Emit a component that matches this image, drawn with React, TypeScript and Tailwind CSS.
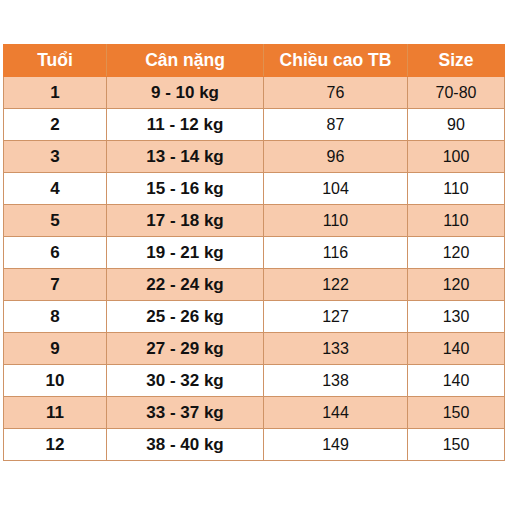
const rows = [
  ["1", "9 - 10 kg", "76", "70-80"],
  ["2", "11 - 12 kg", "87", "90"],
  ["3", "13 - 14 kg", "96", "100"],
  ["4", "15 - 16 kg", "104", "110"],
  ["5", "17 - 18 kg", "110", "110"],
  ["6", "19 - 21 kg", "116", "120"],
  ["7", "22 - 24 kg", "122", "120"],
  ["8", "25 - 26 kg", "127", "130"],
  ["9", "27 - 29 kg", "133", "140"],
  ["10", "30 - 32 kg", "138", "140"],
  ["11", "33 - 37 kg", "144", "150"],
  ["12", "38 - 40 kg", "149", "150"],
];

export default function App() {
  return (
    <div className="w-[505px] h-[505px] bg-white pt-[44px] pl-[3px] font-['Liberation_Sans',Arial,sans-serif]">
      <table className="border-collapse table-fixed w-[501px]">
        <colgroup>
          <col className="w-[103px]" />
          <col className="w-[157px]" />
          <col className="w-[144px]" />
          <col className="w-[97px]" />
        </colgroup>
        <thead>
          <tr className="h-[32px] bg-[#ed7d31] text-white text-[17.5px] font-bold">
            <th className="border border-[#ed7d31] border-r-[#e0914f] text-center">Tuổi</th>
            <th className="border border-[#ed7d31] border-r-[#e0914f] text-center">Cân nặng</th>
            <th className="border border-[#ed7d31] border-r-[#e0914f] text-center">Chiều cao TB</th>
            <th className="border border-[#ed7d31] text-center">Size</th>
          </tr>
        </thead>
        <tbody>
          {rows.map((r, i) => (
            <tr
              key={r[0]}
              className={`h-[32px] text-[#111] ${i % 2 === 0 ? "bg-[#f8cbad]" : "bg-white"}`}
            >
              <td className="border border-[#cf9366] text-center font-bold text-[17px]">{r[0]}</td>
              <td className="border border-[#cf9366] text-center font-bold text-[17px]">{r[1]}</td>
              <td className="border border-[#cf9366] text-center text-[16px]">{r[2]}</td>
              <td className="border border-[#cf9366] text-center text-[16px]">{r[3]}</td>
            </tr>
          ))}
        </tbody>
      </table>
    </div>
  );
}
